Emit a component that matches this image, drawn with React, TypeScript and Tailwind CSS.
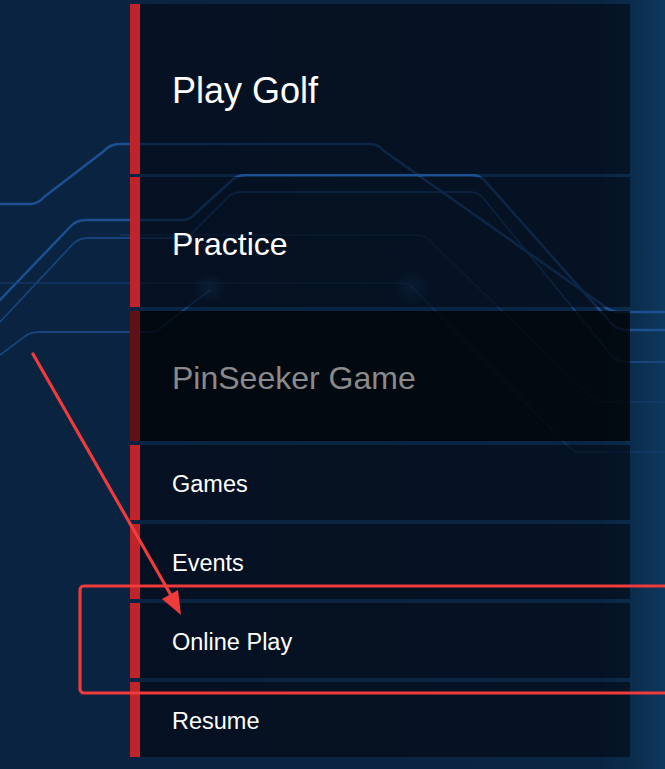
import React from 'react';

type MenuItem = {
  label: string;
  height: string;
  text: string;
  disabled?: boolean;
};

const ITEMS: MenuItem[] = [
  { label: 'Play Golf', height: 'h-[170px]', text: 'text-[36px]' },
  { label: 'Practice', height: 'h-[130px]', text: 'text-[32px]' },
  { label: 'PinSeeker Game', height: 'h-[130px]', text: 'text-[32px]', disabled: true },
  { label: 'Games', height: 'h-[75px]', text: 'text-[23.5px]' },
  { label: 'Events', height: 'h-[75px]', text: 'text-[23.5px]' },
  { label: 'Online Play', height: 'h-[75px]', text: 'text-[23.5px]' },
  { label: 'Resume', height: 'h-[75px]', text: 'text-[23.5px]' },
];

// circuit style lines drawn behind the menu
const CircuitLines = () => (
  <svg className="absolute inset-0" width="665" height="769" viewBox="0 0 665 769" fill="none">
    <defs>
      <radialGradient id="glow" cx="50%" cy="50%" r="50%">
        <stop offset="0%" stopColor="#2f6fb8" stopOpacity="0.3" />
        <stop offset="100%" stopColor="#2f6fb8" stopOpacity="0" />
      </radialGradient>
    </defs>
    <g stroke="#1c5090" strokeWidth="2.5" strokeLinecap="round" strokeLinejoin="round">
      <path d="M0 204 H30 Q38 204 44 197 L104 151 Q110 144 120 144 H370 Q378 144 384 151 L604 306 Q610 312 620 312 H665" />
      <path d="M0 300 L70 227 Q76 220 86 220 H182 Q190 220 196 213 L230 182 Q236 175 246 175 H472 Q480 175 486 182 L612 324 Q618 330 628 330 H665" />
    </g>
    <g stroke="#1a4a86" strokeWidth="1.8" strokeLinecap="round" strokeLinejoin="round" opacity="0.85">
      <path d="M0 322 L72 245 Q78 238 88 238 H180 Q188 238 194 231 L226 199 Q232 192 242 192 H470 Q478 192 484 199 L612 356 Q618 362 628 362 H665" />
      <path d="M0 355 L24 337 Q30 332 40 332 H150 Q158 332 164 325 L210 290" />
    </g>
    <g stroke="#174278" strokeWidth="1.5" strokeLinecap="round" strokeLinejoin="round" opacity="0.6">
      <path d="M0 283 H400 Q410 283 416 291 L566 444 Q572 452 582 452 H665" />
      <path d="M120 235 H417 Q425 235 431 242 L590 396 Q596 402 606 402 H665" />
    </g>
    <circle cx="210" cy="288" r="16" fill="url(#glow)" />
    <circle cx="412" cy="287" r="18" fill="url(#glow)" />
  </svg>
);

// red annotation marks laid over the screenshot
const Annotations = () => (
  <svg className="pointer-events-none absolute inset-0" width="665" height="769" viewBox="0 0 665 769" fill="none">
    <rect x="80" y="586" width="600" height="107" rx="4" stroke="#ef3b3b" strokeWidth="3.2" />
    <line x1="33" y1="354" x2="172" y2="597" stroke="#ef3b3b" strokeWidth="3.2" strokeLinecap="round" />
    <polygon points="181,615 162,599 178,590" fill="#ef3b3b" />
  </svg>
);

export default function App() {
  return (
    <div className="relative h-[769px] w-[665px] overflow-hidden bg-[linear-gradient(90deg,#0a2341_0%,#0a2443_90%,#0b2c4c_95%,#0e385e_100%)] font-['Liberation_Sans',Arial,sans-serif]">
      <CircuitLines />

      <div className="relative ml-[130px] flex w-[500px] flex-col gap-[4px] pt-[4px]">
        {ITEMS.map((item, i) => (
          <div key={item.label} className={`flex ${item.height} ${i === 1 ? '-mt-px' : ''}`}>
            <div className={`w-[10px] shrink-0 ${item.disabled ? 'bg-[#601115]' : 'bg-[#c0232a]'}`} />
            <div className={`flex flex-1 items-center pl-[32px] pt-[4px] ${item.disabled ? 'bg-black/75' : 'bg-[#010409]/55'}`}>
              <span className={`${item.text} leading-none ${item.disabled ? 'text-[#8a8a8a]' : 'text-white'}`}>
                {item.label}
              </span>
            </div>
          </div>
        ))}
      </div>

      <Annotations />
    </div>
  );
}
